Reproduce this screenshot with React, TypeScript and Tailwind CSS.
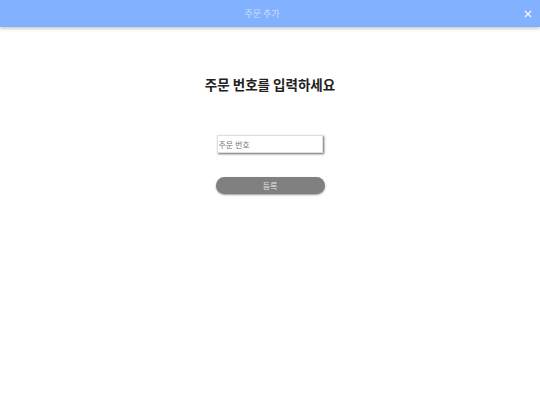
import React, { useState } from 'react';

const App: React.FC = () => {
    const [orderNo, setOrderNo] = useState('');

    return (
        <div className="w-[540px] h-[405px] bg-white flex flex-col" style={{ fontFamily: '"Noto Sans CJK KR", "Noto Sans", sans-serif' }}>
            {/* header bar */}
            <div className="h-[27px] bg-[#82b1ff] flex items-center shadow-[0_2px_3px_rgba(0,0,0,0.2)]">
                <span className="flex-1 text-center text-[9px] text-white/60">주문 추가</span>
                <button className="w-[16px] flex items-center justify-start text-white/90">
                    <svg width="8" height="8" viewBox="0 0 8 8" stroke="currentColor" strokeWidth="1.3" fill="none">
                        <path d="M1 1L7 7M7 1L1 7" />
                    </svg>
                </button>
            </div>

            <div className="flex flex-col items-center">
                <h2 className="mt-[46px] text-[13.5px] font-bold text-[#212121] leading-[22px]">주문 번호를 입력하세요</h2>

                <input
                    value={orderNo}
                    onChange={e => setOrderNo(e.target.value)}
                    placeholder="주문 번호"
                    className="mt-[40px] ml-[-1px] w-[106px] h-[18px] px-[1px] text-[8px] text-[#333] placeholder:text-[#777] border border-[#e0e0e0] bg-white outline-none shadow-[1px_1px_2px_rgba(0,0,0,0.6)]"
                />

                <button className="mt-[24px] w-[109px] h-[17px] rounded-full bg-[#808080] text-[8px] text-white/80 shadow-[0_1px_2px_rgba(0,0,0,0.4)]">
                    등록
                </button>
            </div>
        </div>
    );
};

export default App;
